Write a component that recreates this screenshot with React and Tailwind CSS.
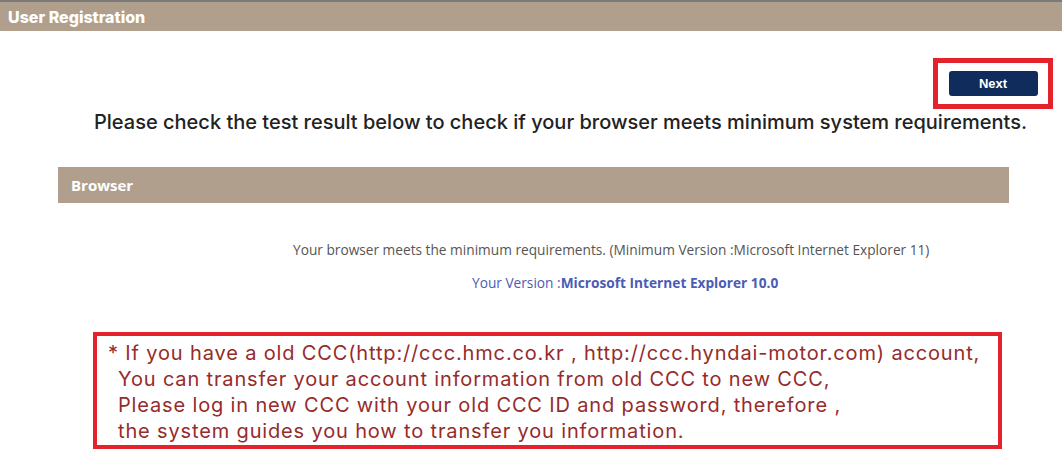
import React from 'react';

const App = () => {
  return (
    <div className="min-h-screen w-[1062px] bg-white font-['Inter','Noto_Sans',sans-serif]">
      {/* Page title bar */}
      <div className="h-[31px] border-t-2 border-[#7a7a7a] bg-[#b09f8c] pl-[8px] flex items-center">
        <h1 className="text-[16px] font-extrabold text-white">User Registration</h1>
      </div>

      {/* Next button */}
      <div className="flex justify-end pr-[9px] mt-[27px]">
        <div className="w-[120px] h-[51px] border-[5px] border-[#e3222b] flex items-center justify-center">
          <button className="w-[89px] h-[25px] rounded-[3px] bg-[#0f2c5c] text-white text-[13px] font-bold font-['Liberation_Sans',sans-serif]">
            Next
          </button>
        </div>
      </div>

      <p className="pl-[94px] -mt-[2px] text-[20px] leading-[30px] font-medium text-[#222]">
        Please check the test result below to check if your browser meets minimum system requirements.
      </p>

      {/* Browser section */}
      <div className="ml-[58px] w-[951px] h-[36px] mt-[30px] bg-[#b09f8c] flex items-center pl-[13px]">
        <h2 className="text-[15px] font-bold text-white font-['Open_Sans',sans-serif]">Browser</h2>
      </div>

      <div className="font-['Open_Sans',sans-serif] text-[13.7px]">
        <p className="pl-[293px] mt-[37px] leading-[20px] text-[#555]">
          Your browser meets the minimum requirements. (Minimum Version :Microsoft Internet Explorer 11)
        </p>
        <p className="pl-[472px] mt-[13px] leading-[20px] text-[#4a5cb4]">
          Your Version :<span className="font-bold">Microsoft Internet Explorer 10.0</span>
        </p>
      </div>

      {/* Notice */}
      <div className="ml-[93px] mt-[39px] w-[909px] h-[117px] border-4 border-[#e3222b] pl-[11px] pt-[4px] text-[20px] tracking-[0.85px] leading-[26px] text-[#962b2b]">
        <p>* If you have a old CCC(http://ccc.hmc.co.kr , http://ccc.hyndai-motor.com) account,</p>
        <p className="pl-[10px]">You can transfer your account information from old CCC to new CCC,</p>
        <p className="pl-[10px]">Please log in new CCC with your old CCC ID and password, therefore ,</p>
        <p className="pl-[10px]">the system guides you how to transfer you information.</p>
      </div>
    </div>
  );
};

export default App;
